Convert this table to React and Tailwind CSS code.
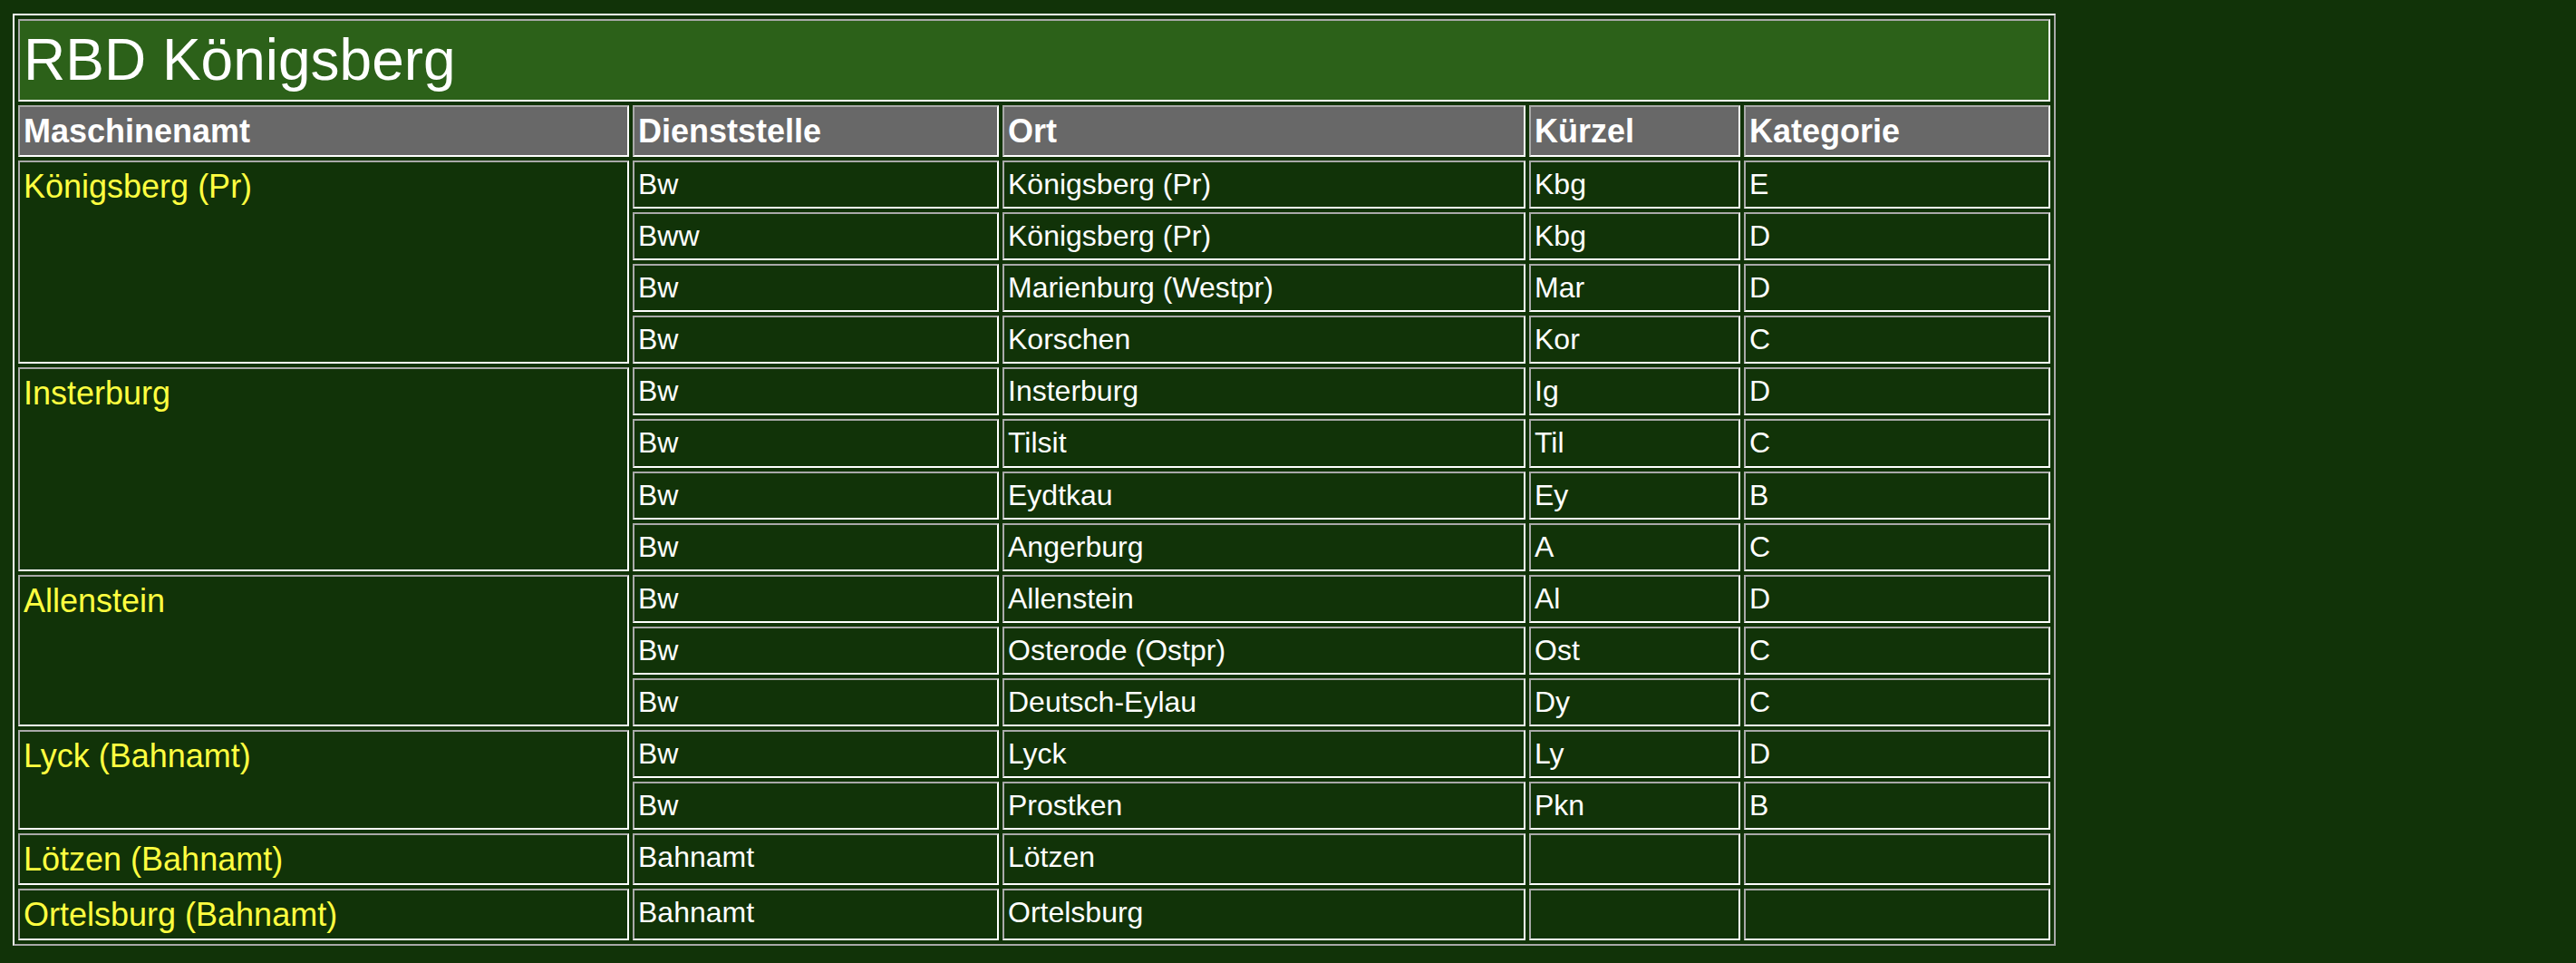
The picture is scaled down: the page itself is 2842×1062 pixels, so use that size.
import React from 'react';

// Dienststellen der RBD Königsberg — Tabelle im Stil einer alten HTML-Seite (border=1, cellspacing)
const GROUPS = [
  ['Königsberg (Pr)', [
    ['Bw', 'Königsberg (Pr)', 'Kbg', 'E'],
    ['Bww', 'Königsberg (Pr)', 'Kbg', 'D'],
    ['Bw', 'Marienburg (Westpr)', 'Mar', 'D'],
    ['Bw', 'Korschen', 'Kor', 'C'],
  ]],
  ['Insterburg', [
    ['Bw', 'Insterburg', 'Ig', 'D'],
    ['Bw', 'Tilsit', 'Til', 'C'],
    ['Bw', 'Eydtkau', 'Ey', 'B'],
    ['Bw', 'Angerburg', 'A', 'C'],
  ]],
  ['Allenstein', [
    ['Bw', 'Allenstein', 'Al', 'D'],
    ['Bw', 'Osterode (Ostpr)', 'Ost', 'C'],
    ['Bw', 'Deutsch-Eylau', 'Dy', 'C'],
  ]],
  ['Lyck (Bahnamt)', [
    ['Bw', 'Lyck', 'Ly', 'D'],
    ['Bw', 'Prostken', 'Pkn', 'B'],
  ]],
  ['Lötzen (Bahnamt)', [['Bahnamt', 'Lötzen', '', '']]],
  ['Ortelsburg (Bahnamt)', [['Bahnamt', 'Ortelsburg', '', '']]],
];

const SPAN = { 1: 'row-span-1', 2: 'row-span-2', 3: 'row-span-3', 4: 'row-span-4' };

// inset-Rahmen wie bei <td> in einer Tabelle mit border
const cell = 'border-2 border-t-[#a9a9a9] border-l-[#a9a9a9] border-b-white border-r-white px-[4px] pt-[6px]';

export default function App() {
  return (
    <div className="min-h-screen w-full bg-[#113308] pl-[14px] pt-[15px] font-['Liberation_Sans',Arial,sans-serif] leading-[normal]">
      <div className="w-[2254px] border-2 border-t-white border-l-white border-b-[#a9a9a9] border-r-[#a9a9a9] p-[4px]">
        <div className="grid grid-cols-[674px_404px_577px_233px_338px] grid-rows-[91px_57px_repeat(13,53.1px)_57px_57px] gap-[4px]">
          <div className={`${cell} col-span-5 bg-[#2c6119] text-[64px] leading-[normal] text-white`}>RBD Königsberg</div>
          {['Maschinenamt', 'Dienststelle', 'Ort', 'Kürzel', 'Kategorie'].map((h) => (
            <div key={h} className={`${cell} bg-[#686868] text-[36px] leading-[normal] font-bold text-white`}>{h}</div>
          ))}
          {GROUPS.map(([amt, rows]) => (
            <React.Fragment key={amt}>
              <div className={`${cell} ${SPAN[rows.length]} text-[36px] leading-[normal] text-[#ffff40]`}>{amt}</div>
              {rows.map((r, i) =>
                r.map((v, j) => (
                  <div key={`${amt}-${i}-${j}`} className={`${cell} text-[32px] leading-[37px] text-white`}>
                    {v}
                  </div>
                ))
              )}
            </React.Fragment>
          ))}
        </div>
      </div>
    </div>
  );
}
